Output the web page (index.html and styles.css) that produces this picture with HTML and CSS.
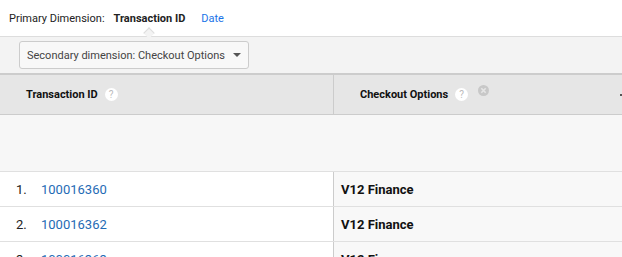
FILE: index.html
```html
<!DOCTYPE html>
<html lang="en">
<head>
    <meta charset="UTF-8">
    <title>Transactions</title>
    <link rel="stylesheet" href="styles.css">
</head>
<body>
    <div class="primary">
        <span class="label">Primary Dimension:</span>
        <span class="current">Transaction ID</span>
        <a class="alt" href="#">Date</a>
    </div>
    <div class="toolbar">
        <div class="select">
            <span>Secondary dimension: Checkout Options</span>
            <span class="arrow"></span>
        </div>
    </div>
    <div class="table">
        <div class="row head">
            <div class="cell first">Transaction ID <span class="help">?</span></div>
            <div class="cell second">Checkout Options <span class="help">?</span>
                <svg class="remove" width="11" height="11" viewBox="0 0 11 11">
                    <circle cx="5.5" cy="5.5" r="5.5" fill="#c8c8c8"/>
                    <path d="M3.3 3.3l4.4 4.4M7.7 3.3l-4.4 4.4" stroke="#e6e6e6" stroke-width="1.6"/>
                </svg>
                <span class="sort"></span>
            </div>
        </div>
        <div class="totals"></div>
        <div class="row">
            <div class="cell first"><span class="num">1.</span><a href="#">100016360</a></div>
            <div class="cell second">V12 Finance</div>
        </div>
        <div class="row">
            <div class="cell first"><span class="num">2.</span><a href="#">100016362</a></div>
            <div class="cell second">V12 Finance</div>
        </div>
        <div class="row">
            <div class="cell first"><span class="num">3.</span><a href="#">100016363</a></div>
            <div class="cell second">V12 Finance</div>
        </div>
    </div>
</body>
</html>
```

FILE: styles.css
```css
body {
    margin: 0;
    font-family: Roboto, "Liberation Sans", sans-serif;
    font-size: 13px;
    color: #222;
    background: #fff;
    overflow: hidden;
}

.primary {
    height: 36px;
    display: flex;
    align-items: center;
    padding-left: 9px;
    font-size: 11px;
}

.primary .label {
    margin-right: 9px;
}

.primary .current {
    font-weight: bold;
    position: relative;
    margin-right: 16px;
}

/* little notch under the active dimension */
.primary .current:after {
    content: "";
    position: absolute;
    left: 50%;
    bottom: -12px;
    width: 7px;
    height: 7px;
    margin-left: -4px;
    background: #f3f3f3;
    border-left: 1px solid #ddd;
    border-top: 1px solid #ddd;
    transform: rotate(45deg);
}

.primary .alt {
    color: #1a73e8;
    text-decoration: none;
}

.toolbar {
    height: 36px;
    background: #f3f3f3;
    border-top: 1px solid #ddd;
    border-bottom: 2px solid #ccc;
    display: flex;
    align-items: center;
    padding-left: 19px;
}

.select {
    width: 230px;
    height: 28px;
    box-sizing: border-box;
    border: 1px solid #ccc;
    border-radius: 3px;
    background: #f8f8f8;
    display: flex;
    align-items: center;
    justify-content: space-between;
    padding: 0 7px 0 7px;
    color: #444;
    font-size: 11px;
    white-space: nowrap;
}

.select .arrow {
    width: 0;
    height: 0;
    border-left: 4px solid transparent;
    border-right: 4px solid transparent;
    border-top: 4px solid #555;
}

.row {
    display: flex;
    height: 34px;
    border-bottom: 1px solid #e0e0e0;
}

.cell {
    display: flex;
    align-items: center;
    box-sizing: border-box;
}

.cell.first {
    width: 333px;
    padding-left: 16px;
    background: #fff;
}

.cell.second {
    flex: 1;
    border-left: 1px solid #ccc;
    padding-left: 7px;
    background: #f8f8f8;
    font-weight: bold;
    color: #111;
}

.row.head {
    height: 39px;
    border-bottom: 1px solid #ccc;
}

.row.head .cell {
    background: #e6e6e6;
    font-weight: bold;
    font-size: 11px;
    color: #111;
}

.row.head .cell.first {
    padding-left: 26px;
}

.row.head .cell.second {
    padding-left: 26px;
    position: relative;
}

.help {
    display: inline-block;
    width: 13px;
    height: 13px;
    border-radius: 50%;
    background: #fff;
    color: #bbb;
    font-size: 10px;
    font-weight: normal;
    line-height: 13px;
    text-align: center;
    margin-left: 7px;
}

.remove {
    margin-left: 10px;
    margin-bottom: 8px;
}

.sort {
    position: absolute;
    right: -3px;
    top: 19px;
    width: 5px;
    height: 2px;
    background: #555;
}

.totals {
    height: 56px;
    background: #f7f7f7;
    border-bottom: 1px solid #e0e0e0;
}

.num {
    width: 25px;
}

.cell.first a {
    color: #1f6bb5;
    text-decoration: none;
}
```
